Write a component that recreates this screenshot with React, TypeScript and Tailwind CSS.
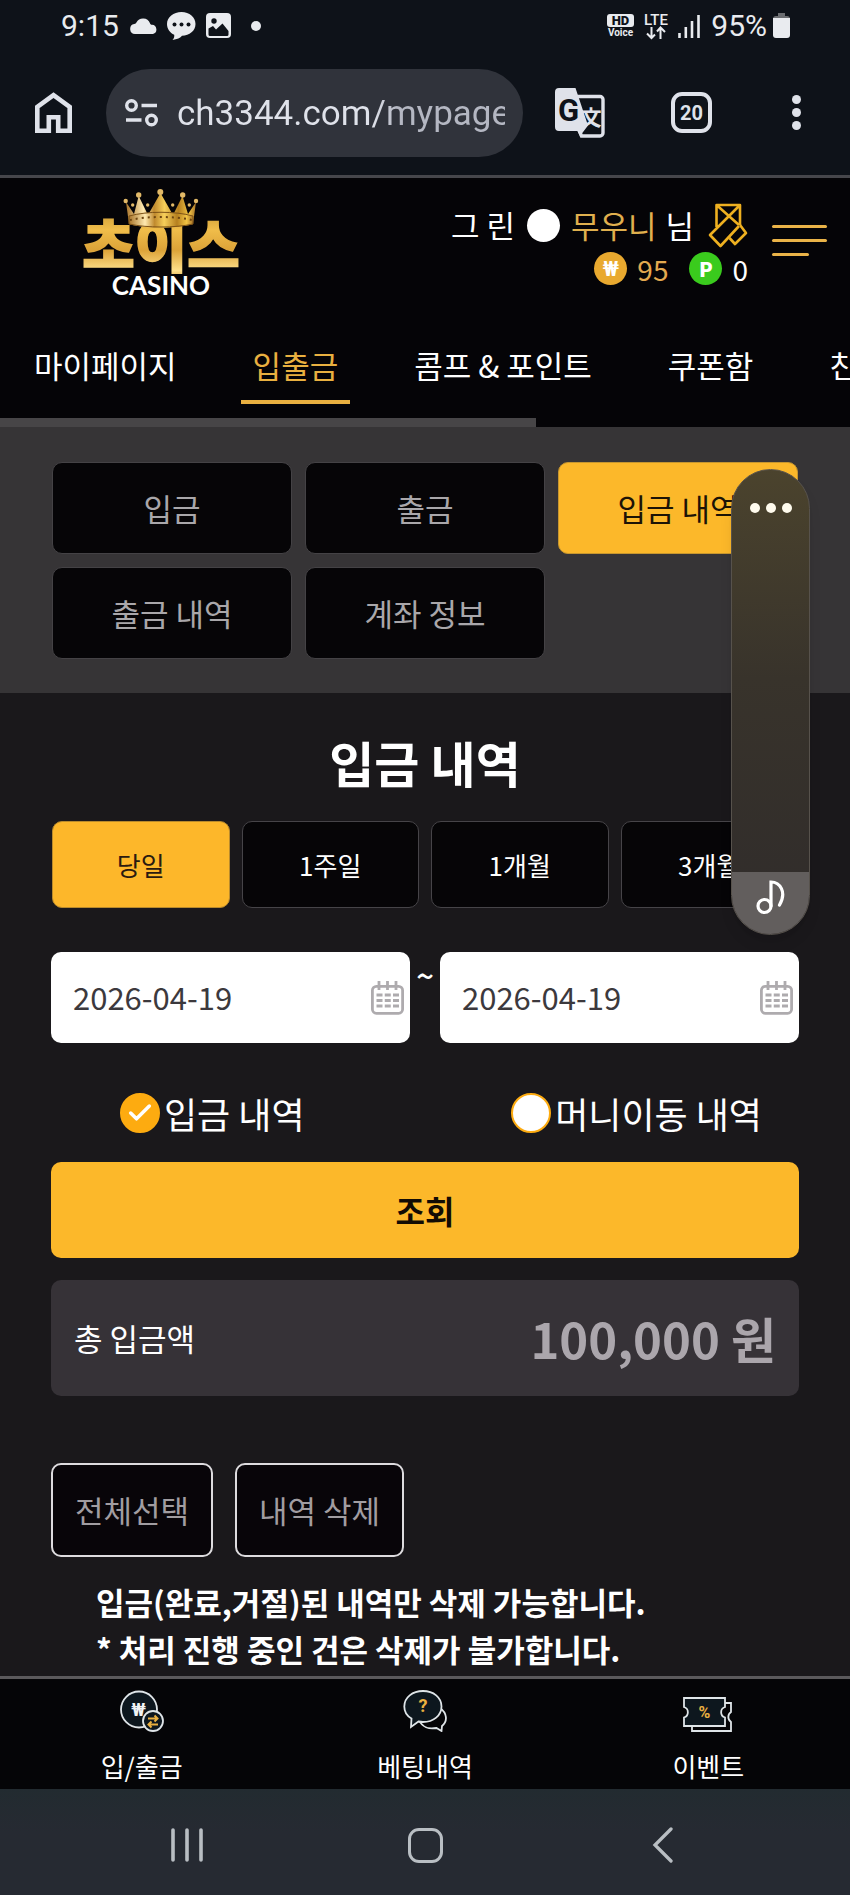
import { useState } from 'react';
import { Check } from 'lucide-react';

const navTabs = ['마이페이지', '입출금', '콤프 & 포인트', '쿠폰함', '친구'];
const subMenus = ['입금', '출금', '입금 내역', '출금 내역', '계좌 정보'];
const periods = ['당일', '1주일', '1개월', '3개월'];

function StatusBar() {
  return (
    <div className="flex h-[50px] items-center justify-between pt-px pl-[61px] pr-[60px] font-[Roboto,sans-serif] text-[30px] leading-none text-[#e9ebef]">
      <div className="flex items-center">
        <span>9:15</span>
        <svg className="ml-[11px]" width="28" height="18" viewBox="0 0 28 18" fill="currentColor">
          <path d="M5 17a5 5 0 0 1-.8-9.9C5.500 6.800 6 6.600 6.400 5.600A7.500 7.500 0 0 1 20 6.200c.3 1 .8 1.400 2 1.600A4.700 4.700 0 0 1 23 17Z" />
        </svg>
        <svg className="ml-[9px]" width="29" height="28" viewBox="0 0 29 28" fill="currentColor">
          <path d="M14.500 0C22.500 0 28.500 5.200 28.500 12S22.500 23.500 15 23.800c-1.500 2-5 3.700-9.500 4.200 1.600-1.700 2-3.400 1.700-5.200C3 20.800 0 17 0 12 0 5.200 6.500 0 14.500 0Z" />
          <g fill="#0e1219">
            <circle cx="7.500" cy="12.500" r="2" />
            <circle cx="14.500" cy="12.500" r="2" />
            <circle cx="21.500" cy="12.500" r="2" />
          </g>
        </svg>
        <svg className="ml-[10px]" width="25" height="26" viewBox="0 0 25 26">
          <rect width="25" height="25" rx="4" fill="currentColor" />
          <path d="M2.500 15.500 7 13l3 3.500 6.500-6 6 7.500v3.500a1.500 1.500 0 0 1-1.500 1.500H4a1.500 1.500 0 0 1-1.500-1.500Z" fill="#0e1219" />
          <circle cx="8" cy="8" r="2.700" fill="#0e1219" />
        </svg>
        <span className="ml-5 size-[10px] rounded-full bg-current" />
      </div>
      <div className="flex items-center">
        <svg width="27" height="26" viewBox="0 0 27 26">
          <rect y="1" width="27" height="13" rx="3" fill="currentColor" />
          <text x="13.500" y="12" textAnchor="middle" fontFamily="Roboto" fontWeight="900" fontSize="13" fill="#0e1219">HD</text>
          <text x="13.500" y="23" textAnchor="middle" fontFamily="Roboto" fontWeight="700" fontSize="10" fill="currentColor">Voice</text>
        </svg>
        <svg className="ml-[8px] overflow-visible" width="28" height="28" viewBox="0 0 28 28" fill="none" stroke="currentColor" strokeWidth="2">
          <text x="14" y="12.500" textAnchor="middle" fontFamily="Roboto" fontWeight="500" fontSize="15" fill="currentColor" stroke="none">LTE</text>
          <path d="M9.500 15v11M5 21.500 9.500 26 13 22.500M18.500 27V16M15 19.500l3.500-4 4.500 4.500" />
        </svg>
        <svg className="ml-[8px]" width="22" height="24" viewBox="0 0 22 24" stroke="currentColor" strokeWidth="2.600">
          <path d="M1.500 24v-5M7.800 24V13M14 24V7M20.500 24V1" />
        </svg>
        <span className="ml-[11px]">95%</span>
        <svg className="ml-[6px]" width="17" height="26" viewBox="0 0 17 26">
          <path d="M5 0h7v3h2a3 3 0 0 1 3 3H0a3 3 0 0 1 3-3h2Z" fill="#6b6d71" />
          <path d="M0 5h17v17a3 3 0 0 1-3 3H3a3 3 0 0 1-3-3Z" fill="currentColor" />
        </svg>
      </div>
    </div>
  );
}

function BrowserBar() {
  return (
    <div className="flex h-[125px] items-center pl-[35px] pr-[49px] font-[Roboto,sans-serif] text-[#dfe2ea]">
      <button aria-label="홈">
        <svg width="37" height="42" viewBox="0 0 37 42" fill="none" stroke="currentColor" strokeWidth="4.600">
          <path d="M2.300 38.700V15L18.500 3.200 34.700 15v23.700H23.200V25.300h-9.400v13.400Z" />
        </svg>
      </button>
      <div className="ml-[34px] flex h-[88px] min-w-0 flex-1 items-center rounded-full bg-[#30333b] pl-[19px] pr-[18px]">
        <button aria-label="사이트 정보" className="shrink-0">
          <svg width="33" height="28" viewBox="0 0 33 28" fill="none" stroke="currentColor" strokeWidth="3.400">
            <circle cx="6.500" cy="6.500" r="4.800" />
            <circle cx="26.500" cy="21" r="4.800" />
            <path d="M16.500 6.500H32M1 21h15.500" />
          </svg>
        </button>
        <input
          aria-label="주소창"
          defaultValue="ch3344.com/mypage"
          className="ml-[19px] w-full min-w-0 bg-[linear-gradient(90deg,#dfe2ea_196px,#b4b7c2_220px)] bg-clip-text pt-1 text-[35px] text-transparent outline-none"
        />
      </div>
      <button aria-label="번역" className="ml-8">
        <svg width="50" height="50" viewBox="0 0 50 50">
          <path d="M22 8.500h23a3 3 0 0 1 3 3V45a3 3 0 0 1-3 3H26.500L24 42" fill="none" stroke="currentColor" strokeWidth="3.400" />
          <text x="36" y="37" textAnchor="middle" fontFamily="Noto Sans CJK KR" fontWeight="700" fontSize="21" fill="currentColor">文</text>
          <path d="M4 0h16.500L33 37.500 25 48l-2.500-5H4a4 4 0 0 1-4-4V4a4 4 0 0 1 4-4Z" fill="currentColor" />
          <text x="13.500" y="33" textAnchor="middle" fontFamily="Roboto" fontWeight="700" fontSize="31" fill="#0e1219">G</text>
        </svg>
      </button>
      <button className="ml-[66px] flex size-[41px] items-center justify-center rounded-[11px] border-4 border-current text-xl leading-none font-bold">
        20
      </button>
      <button aria-label="더보기" className="ml-[80px] flex flex-col gap-1">
        <span className="size-[9px] rounded-full bg-current" />
        <span className="size-[9px] rounded-full bg-current" />
        <span className="size-[9px] rounded-full bg-current" />
      </button>
    </div>
  );
}

function Logo() {
  return (
    <svg width="170" height="120" viewBox="0 0 170 120" role="img" aria-label="초이스 CASINO">
      <defs>
        <linearGradient id="gold" x1="0" y1="0" x2="0" y2="1">
          <stop offset="0" stopColor="#b98a2c" />
          <stop offset="0.350" stopColor="#f0bd4a" />
          <stop offset="0.600" stopColor="#dca338" />
          <stop offset="0.850" stopColor="#ffe08a" />
          <stop offset="1" stopColor="#c88a28" />
        </linearGradient>
        <linearGradient id="crown" x1="0" y1="0" x2="1" y2="0">
          <stop offset="0" stopColor="#a8742a" />
          <stop offset="0.250" stopColor="#ffe9b0" />
          <stop offset="0.400" stopColor="#c08a2e" />
          <stop offset="0.550" stopColor="#f7cf5a" />
          <stop offset="0.750" stopColor="#b57f1f" />
          <stop offset="0.900" stopColor="#f2c443" />
          <stop offset="1" stopColor="#a8742a" />
        </linearGradient>
      </defs>
      <text x="85" y="79" textAnchor="middle" fontFamily="Noto Sans CJK KR" fontWeight="900" fontSize="57" fill="url(#gold)" stroke="url(#gold)" strokeWidth="1.500">초이스</text>
      <path d="M50 14 53 36c18 5 46 5 64 0l3-22-8 12-5.500-18L97 27 84.500 5 72 27 62.700 8 58 26Z" fill="url(#crown)" />
      <path d="M53 28c18-5 46-5 64 0v8c-18 4-46 4-64 0Z" fill="url(#crown)" stroke="#7d5216" />
      <path d="M54 32c18-4 44-4 62 0" fill="none" stroke="#6d4510" strokeDasharray="2 4" strokeWidth="2" />
      <g fill="#e2b968">
        <circle cx="49.700" cy="13" r="2.200" />
        <circle cx="62.700" cy="7" r="2.700" />
        <circle cx="84.300" cy="4" r="3" />
        <circle cx="106.700" cy="7" r="2.700" />
        <circle cx="120" cy="13" r="2.200" />
        <circle cx="56.700" cy="17" r="1.700" />
        <circle cx="71.700" cy="17" r="1.700" />
        <circle cx="96.700" cy="17" r="1.700" />
        <circle cx="113.300" cy="17" r="1.700" />
      </g>
      <text x="85" y="107" textAnchor="middle" fontFamily="Lato" fontWeight="700" fontSize="26" fill="#fff">CASINO</text>
    </svg>
  );
}

function SiteHeader() {
  return (
    <header className="overflow-hidden bg-[#050407]">
      <div className="flex h-[152px] items-start justify-between pl-[76px] pr-[23px]">
        <a href="#" className="mt-[10px]">
          <Logo />
        </a>
        <div className="mt-[26px] flex">
          <div>
            <div className="flex h-[43px] items-center justify-end text-[31px] text-white">
              <span>그 린</span>
              <span className="mr-[11px] ml-3 size-[33px] rounded-full bg-white" />
              <span className="text-[#e0b04e]">무우니</span>
              <span className="ml-[9px]">님</span>
              <svg className="ml-[14px]" width="40" height="46" viewBox="0 0 40 46" fill="none" stroke="#eeb020" strokeWidth="2.600" strokeLinejoin="round">
                <path d="M8.500 24V2H32v20M8.500 2 31 22M32 2 2 32l10.500 11L31 23" />
                <path d="M21.500 35l5.500 6 11-11-6-8" />
              </svg>
            </div>
            <div className="flex h-[43px] items-center justify-end text-[28px] leading-10 text-white">
              <span className="flex size-[33px] items-center justify-center rounded-full bg-[#e9a92f] font-[Roboto,sans-serif] text-xl font-bold">₩</span>
              <span className="ml-[10px] text-[#e3a950]">95</span>
              <span className="ml-[21px] flex size-[33px] items-center justify-center rounded-full bg-[#3acb1d] text-xl font-black">P</span>
              <span className="ml-[10px]">0</span>
            </div>
          </div>
          <button aria-label="메뉴" className="ml-6 mt-[21px] flex flex-col gap-[11px] self-start">
            <span className="h-[3px] w-[55px] rounded-full bg-[#eab348]" />
            <span className="h-[3px] w-[55px] rounded-full bg-[#eab348]" />
            <span className="h-[3px] w-[37px] rounded-full bg-[#eab348]" />
          </button>
        </div>
      </div>
      <nav className="flex gap-[52px] pl-[22px] text-[31px] whitespace-nowrap">
        {navTabs.map((tab) => (
          <a
            key={tab}
            href="#"
            className={
              tab === '입출금'
                ? 'flex h-[74px] items-center border-b-4 border-[#e9b040] px-3 text-[#e9b040]'
                : 'flex h-[74px] items-center border-b-4 border-transparent px-3 text-white'
            }
          >
            {tab}
          </a>
        ))}
      </nav>
      <div className="mt-[14px] h-[9px] w-[63%] bg-[#474547]" />
    </header>
  );
}

function DateField({ label }: { label: string }) {
  return (
    <div className="flex h-[91px] min-w-0 flex-1 items-center rounded-[10px] bg-white pl-[22px] pr-[6px]">
      <input aria-label={label} defaultValue="2026-04-19" className="w-full min-w-0 text-[31px] text-[#3c393d] outline-none" />
      <button aria-label="달력 열기" className="shrink-0">
        <svg width="33" height="34" viewBox="0 0 33 34" fill="none" stroke="#aeabae" strokeWidth="2.800">
          <rect x="1.400" y="5.300" width="30.200" height="27" rx="4" />
          <path d="M8 0v9M16.500 0v9M25 0v9" />
          <path d="M5.500 14h22.500M5.500 19.500h22.500M5.500 25h22.500" strokeDasharray="6 2.250" />
        </svg>
      </button>
    </div>
  );
}

function HistoryOption({ label, checked, onChange }: { label: string; checked: boolean; onChange: () => void }) {
  return (
    <label className="flex items-center gap-1">
      <span className="grid place-items-center">
        <input
          type="radio"
          name="history"
          checked={checked}
          onChange={onChange}
          className="col-start-1 row-start-1 size-10 appearance-none rounded-full border-2 border-[#fdab10] bg-white checked:bg-[#fdab10]"
        />
        {checked && <Check className="pointer-events-none col-start-1 row-start-1 text-white" size={28} strokeWidth={3} />}
      </span>
      <span className="text-4xl leading-10">{label}</span>
    </label>
  );
}

function VolumePanel() {
  return (
    <div className="absolute top-[469px] right-10 flex h-[466px] w-[79px] flex-col justify-between overflow-hidden rounded-full border border-[#57524c] bg-linear-to-b from-[#4b432d] via-[#38332b] via-45% to-[#302c2b] shadow-lg">
      <button aria-label="음량 설정" className="flex justify-center gap-[6px] pt-[33px]">
        <span className="size-[10px] rounded-full bg-[#fffbee]" />
        <span className="size-[10px] rounded-full bg-[#fffbee]" />
        <span className="size-[10px] rounded-full bg-[#fffbee]" />
      </button>
      <input type="range" aria-label="미디어 음량" defaultValue={13} className="w-full flex-1 opacity-0 [writing-mode:vertical-lr] [direction:rtl]" />
      <button aria-label="미디어" className="flex h-[62px] shrink-0 justify-center bg-[#625e5d] pt-2">
        <svg width="30" height="35" viewBox="0 0 30 35" fill="none" stroke="#fff" strokeWidth="3.200" strokeLinecap="round">
          <circle cx="8.500" cy="26" r="6.500" />
          <path d="M15 26V2c9 0 16 10 8.500 23" />
        </svg>
      </button>
    </div>
  );
}

function BottomMenu() {
  return (
    <nav className="grid h-[113px] grid-cols-3 border-t-[3px] border-[#5b595c] bg-[#050507] text-[26px] leading-9 text-white">
      <a href="#" className="flex flex-col items-center gap-4 pt-[11px]">
        <svg width="44" height="42" viewBox="0 0 44 42" stroke="#dfe5e8" strokeWidth="1.800" fill="#0d171e">
          <circle cx="19" cy="19.500" r="18" />
          <text x="18.500" y="25.500" textAnchor="middle" fontFamily="Roboto" fontWeight="700" fontSize="18" fill="#f1f4f5" stroke="none">₩</text>
          <circle cx="33" cy="31" r="10" />
          <path d="M28 28.500h9.500M34.500 25.500l3 3-3 3M38 34.500h-9.500M31.500 31.500l-3 3 3 3" stroke="#eab040" strokeWidth="2" fill="none" />
        </svg>
        <span>입/출금</span>
      </a>
      <a href="#" className="flex flex-col items-center gap-4 pt-[11px]">
        <svg width="44" height="42" viewBox="0 0 44 42" stroke="#dfe5e8" strokeWidth="1.800" fill="#0d171e">
          <path d="M37 18c7 5 8 13 2 18l-.5 5-5-3C26 39.500 19 37 16 30" fill="none" />
          <path d="M20 1c10.500 0 18.500 6.500 18.500 15.500S30.500 32 20 32c-2 0-3-.2-4.500-.5L8 37l.5-8.500C4 26 1.300 21.500 1.300 16.500 1.300 7.500 9.500 1 20 1Z" />
          <text x="20" y="22" textAnchor="middle" fontFamily="Roboto" fontWeight="700" fontSize="18" fill="#eab040" stroke="none">?</text>
        </svg>
        <span>베팅내역</span>
      </a>
      <a href="#" className="flex flex-col items-center gap-4 pt-[11px]">
        <svg width="50" height="42" viewBox="0 0 50 42" stroke="#dfe5e8" strokeWidth="1.800" fill="#0d171e">
          <path d="M9 13h39v9a6 6 0 0 0 0 10v9H9Z" fill="none" />
          <path d="M1 8h41v9a5.500 5.500 0 0 0 0 10.500V36H1v-8.500A5.500 5.500 0 0 0 1 17Z" />
          <text x="21.500" y="28" textAnchor="middle" fontFamily="Roboto" fontWeight="700" fontSize="16" fill="#eab040" stroke="none">%</text>
        </svg>
        <span>이벤트</span>
      </a>
    </nav>
  );
}

function SystemNav() {
  return (
    <div className="flex h-[106px] items-center justify-between bg-linear-to-b from-[#222b30] to-[#262a32] to-40% px-[20%] pt-[6px] text-[#b9bec3]">
      <button aria-label="최근 앱">
        <svg width="34" height="34" viewBox="0 0 34 34" stroke="currentColor" strokeWidth="3.600" strokeLinecap="round">
          <path d="M3 2v30M17 2v30M31 2v30" />
        </svg>
      </button>
      <button aria-label="홈 화면" className="h-[35px] w-[35px] rounded-[11px] border-[3px] border-current" />
      <button aria-label="뒤로">
        <svg width="34" height="36" viewBox="0 0 34 36" fill="none" stroke="currentColor" strokeWidth="3.300" strokeLinecap="round">
          <path d="M25 2 9 18l16 16" />
        </svg>
      </button>
    </div>
  );
}

export default function App() {
  const [period, setPeriod] = useState('당일');
  const [history, setHistory] = useState('deposit');

  return (
    <div className="relative overflow-hidden bg-[#1a181b] font-['Noto_Sans_CJK_KR',sans-serif]">
      <div className="border-b-[3px] border-[#46464b] bg-[#0e1219]">
        <StatusBar />
        <BrowserBar />
      </div>
      <SiteHeader />

      <section className="grid grid-cols-3 gap-[13px] bg-[#363436] px-[52px] pt-[35px] pb-[34px] text-[31px]">
        {subMenus.map((menu) => (
          <button
            key={menu}
            className={
              menu === '입금 내역'
                ? 'h-[92px] rounded-[10px] border border-[#c7962f] bg-[#fcb82a] text-[#1c1306]'
                : 'h-[92px] rounded-[10px] border border-[#444245] bg-[#060507] text-[#a9a7aa]'
            }
          >
            {menu}
          </button>
        ))}
      </section>

      <main className="px-[51px] pt-[37px] pb-1 text-white">
        <h1 className="text-center text-[49px] leading-[64px] font-bold">입금 내역</h1>

        <div className="mt-[27px] grid grid-cols-4 gap-3 px-px text-[26px]">
          {periods.map((item) => (
            <button
              key={item}
              onClick={() => setPeriod(item)}
              className={
                item === period
                  ? 'h-[87px] rounded-[10px] border border-[#b98a2c] bg-[#fdb72a] text-[#2a1a10]'
                  : 'h-[87px] rounded-[10px] border border-[#464448] bg-[#060507]'
              }
            >
              {item}
            </button>
          ))}
        </div>

        <div className="mt-11 flex">
          <DateField label="시작일" />
          <span className="w-[30px] text-center text-[31px] leading-[46px] font-medium">~</span>
          <DateField label="종료일" />
        </div>

        <div className="mt-[50px] flex justify-between pl-[69px] pr-[37px]">
          <HistoryOption label="입금 내역" checked={history === 'deposit'} onChange={() => setHistory('deposit')} />
          <HistoryOption label="머니이동 내역" checked={history === 'transfer'} onChange={() => setHistory('transfer')} />
        </div>

        <button className="mt-[29px] h-24 w-full rounded-[10px] bg-[#fcb82a] text-[32px] font-bold text-[#120c04]">조회</button>

        <div className="mt-[22px] flex h-[116px] items-center justify-between rounded-[10px] bg-[#363237] px-[23px]">
          <span className="text-[31px]">총 입금액</span>
          <strong className="text-[49px] font-bold text-[#aba6ac]">100,000 원</strong>
        </div>

        <div className="mt-[67px] flex gap-[22px] text-[31px] text-[#a19da1]">
          <button className="h-[94px] rounded-[10px] border-2 border-[#dddbde] bg-[#080509] px-[22px]">전체선택</button>
          <button className="h-[94px] rounded-[10px] border-2 border-[#dddbde] bg-[#080509] px-[22px]">내역 삭제</button>
        </div>

        <p className="mt-[21px] pl-[45px] text-[31px] leading-[47px] font-bold">
          입금(완료,거절)된 내역만 삭제 가능합니다.
          <br />* 처리 진행 중인 건은 삭제가 불가합니다.
        </p>
      </main>

      <BottomMenu />
      <SystemNav />
      <VolumePanel />
    </div>
  );
}
